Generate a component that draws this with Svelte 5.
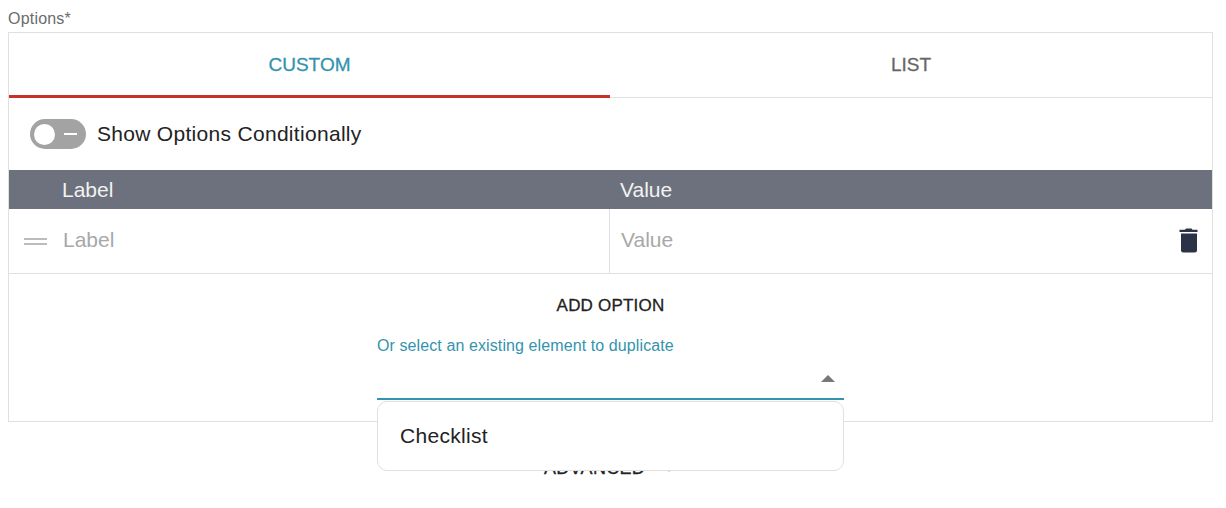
<script lang="ts">
  let tabs = [
    { name: 'CUSTOM', active: true },
    { name: 'LIST', active: false }
  ];
</script>

<div class="page">
  <div class="field-label">Options*</div>

  <div class="options-box">
    <div class="tabs">
      {#each tabs as tab}
        <div class="tab" class:active={tab.active}>{tab.name}</div>
      {/each}
    </div>

    <div class="toggle-row">
      <div class="toggle">
        <span class="knob"></span>
        <span class="dash"></span>
      </div>
      <span>Show Options Conditionally</span>
    </div>

    <div class="table-head">
      <div class="head-label">Label</div>
      <div class="head-value">Value</div>
    </div>

    <div class="table-row">
      <div class="cell-label">
        <span class="drag"></span>
        <span class="placeholder">Label</span>
      </div>
      <div class="cell-value">
        <span class="placeholder">Value</span>
        <svg class="trash" width="20" height="26" viewBox="0 0 20 26">
          <path d="M7.4 1.5h5.2l.8 1.3h5.1v2.1H.5V2.8h5.100z" fill="#2b3447" />
          <path d="M2 6.500h16v16.700a2.300 2.300 0 0 1-2.300 2.300H4.300A2.300 2.300 0 0 1 2 23.200z" fill="#2b3447" />
        </svg>
      </div>
    </div>

    <div class="add-section">
      <div class="add-option">ADD OPTION</div>
      <div class="select-wrap">
        <div class="select-label">Or select an existing element to duplicate</div>
        <div class="select-input">
          <span class="caret"></span>
        </div>
        <div class="menu">Checklist</div>
      </div>
    </div>
  </div>

  <div class="advanced">
    <span>ADVANCED</span>
    <svg width="10" height="7" viewBox="0 0 10 7">
      <path d="M1 1l4 4.500L9 1" fill="none" stroke="#555" stroke-width="1.500" />
    </svg>
  </div>
</div>

<style>
  :global(body) {
    margin: 0;
    background: #fff;
    overflow: hidden;
  }

  .page {
    padding: 0 13px 0 8px;
    font-family: "Liberation Sans", Arial, sans-serif;
    color: #222;
  }

  .field-label {
    height: 32px;
    padding-top: 10px;
    box-sizing: border-box;
    font-size: 16px;
    line-height: 17px;
    letter-spacing: 0.2px;
    color: #6b6b6b;
  }

  .options-box {
    border: 1px solid #e0e0e0;
    height: 390px;
    box-sizing: border-box;
  }

  .tabs {
    display: grid;
    grid-template-columns: 601px 1fr;
    height: 65px;
  }

  .tab {
    display: flex;
    align-items: center;
    justify-content: center;
    font-size: 19px;
    -webkit-text-stroke: 0.3px currentColor;
    color: #666;
    border-bottom: 1px solid #e0e0e0;
  }

  .tab.active {
    color: #3493ad;
    padding-top: 2px;
    border-bottom: 3px solid #c8302b;
  }

  .toggle-row {
    display: flex;
    align-items: center;
    gap: 11px;
    height: 72px;
    padding-left: 21px;
    font-size: 21px;
    letter-spacing: 0.3px;
    color: #222;
  }

  .toggle {
    display: flex;
    align-items: center;
    width: 56px;
    height: 30px;
    padding-left: 4px;
    box-sizing: border-box;
    border-radius: 15px;
    background: #a3a3a3;
  }

  .knob {
    width: 21px;
    height: 21px;
    border-radius: 50%;
    background: #fff;
  }

  .dash {
    width: 13px;
    height: 2px;
    margin-left: 9px;
    background: #fff;
  }

  .table-head {
    display: grid;
    grid-template-columns: 601px 1fr;
    height: 39px;
    align-items: center;
    background: #6c717d;
    color: #f2f2f2;
    font-size: 21px;
  }

  .head-label {
    padding-left: 53px;
  }

  .head-value {
    padding-left: 10px;
  }

  .table-row {
    display: grid;
    grid-template-columns: 601px 1fr;
    height: 65px;
    box-sizing: border-box;
    border-bottom: 1px solid #e0e0e0;
    font-size: 21px;
  }

  .cell-label {
    display: flex;
    align-items: center;
    padding-left: 15px;
    padding-bottom: 3px;
    border-right: 1px solid #e0e0e0;
  }

  .cell-value {
    display: flex;
    align-items: center;
    justify-content: space-between;
    padding: 0 13px 3px 11px;
  }

  .drag {
    width: 23px;
    height: 3px;
    margin-top: 4px;
    margin-right: 16px;
    border-top: 2.500px solid #bcbcbc;
    border-bottom: 2.500px solid #bcbcbc;
  }

  .placeholder {
    color: #a8a8a8;
  }

  .trash {
    display: block;
  }

  .add-section {
    display: flex;
    flex-direction: column;
    align-items: center;
    padding-top: 22px;
  }

  .add-option {
    font-size: 17px;
    line-height: 19px;
    letter-spacing: 0.2px;
    -webkit-text-stroke: 0.3px currentColor;
    color: #222;
  }

  .select-wrap {
    position: relative;
    width: 467px;
    margin-top: 22px;
  }

  .select-label {
    font-size: 16px;
    line-height: 18px;
    letter-spacing: 0.1px;
    color: #3493ad;
  }

  .select-input {
    display: flex;
    justify-content: flex-end;
    align-items: center;
    height: 45px;
    padding-right: 9px;
    box-sizing: border-box;
    border-bottom: 2px solid #3493ad;
  }

  .caret {
    margin-top: 4px;
    border-left: 7px solid transparent;
    border-right: 7px solid transparent;
    border-bottom: 7px solid #777;
  }

  .menu {
    position: absolute;
    z-index: 2;
    top: 64px;
    left: 0;
    right: 0;
    height: 70px;
    padding-left: 22px;
    box-sizing: border-box;
    display: flex;
    align-items: center;
    background: #fff;
    border: 1px solid #e0e0e0;
    border-radius: 10px;
    font-size: 21px;
    letter-spacing: 0.3px;
    color: #222;
  }

  .advanced {
    display: flex;
    align-items: center;
    gap: 19px;
    margin-top: 37px;
    margin-left: 536px;
    font-size: 18px;
    line-height: 19px;
    letter-spacing: 0.3px;
    -webkit-text-stroke: 0.3px currentColor;
  }
</style>
